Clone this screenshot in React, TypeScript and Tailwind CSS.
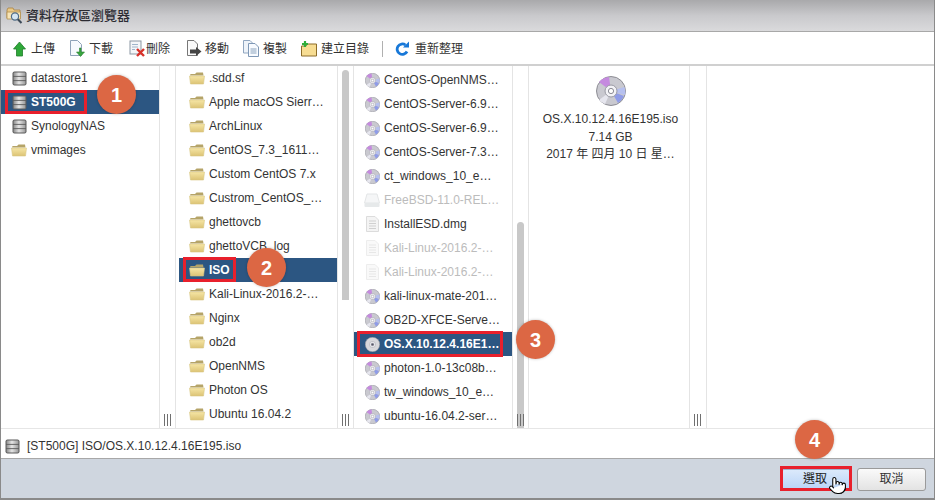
/**
 * Datastore browser dialog (vSphere style), with numbered callouts on top.
 */

import { Pointer } from 'lucide-react';

type Kind = 'db' | 'folder' | 'disc' | 'file' | 'drive';

interface Row {
  label: string;
  kind: Kind;
  disabled?: boolean;
  selected?: boolean;
}

const datastores: Row[] = [
  { label: 'datastore1', kind: 'db' },
  { label: 'ST500G', kind: 'db', selected: true },
  { label: 'SynologyNAS', kind: 'db' },
  { label: 'vmimages', kind: 'folder' },
];

const folders: Row[] = [
  { label: '.sdd.sf', kind: 'folder' },
  { label: 'Apple macOS Sierr…', kind: 'folder' },
  { label: 'ArchLinux', kind: 'folder' },
  { label: 'CentOS_7.3_1611…', kind: 'folder' },
  { label: 'Custom CentOS 7.x', kind: 'folder' },
  { label: 'Custrom_CentOS_…', kind: 'folder' },
  { label: 'ghettovcb', kind: 'folder' },
  { label: 'ghettoVCB_log', kind: 'folder' },
  { label: 'ISO', kind: 'folder', selected: true },
  { label: 'Kali-Linux-2016.2-…', kind: 'folder' },
  { label: 'Nginx', kind: 'folder' },
  { label: 'ob2d', kind: 'folder' },
  { label: 'OpenNMS', kind: 'folder' },
  { label: 'Photon OS', kind: 'folder' },
  { label: 'Ubuntu 16.04.2', kind: 'folder' },
];

const files: Row[] = [
  { label: 'CentOS-OpenNMS…', kind: 'disc' },
  { label: 'CentOS-Server-6.9…', kind: 'disc' },
  { label: 'CentOS-Server-6.9…', kind: 'disc' },
  { label: 'CentOS-Server-7.3…', kind: 'disc' },
  { label: 'ct_windows_10_e…', kind: 'disc' },
  { label: 'FreeBSD-11.0-REL…', kind: 'drive', disabled: true },
  { label: 'InstallESD.dmg', kind: 'file' },
  { label: 'Kali-Linux-2016.2-…', kind: 'file', disabled: true },
  { label: 'Kali-Linux-2016.2-…', kind: 'file', disabled: true },
  { label: 'kali-linux-mate-201…', kind: 'disc' },
  { label: 'OB2D-XFCE-Serve…', kind: 'disc' },
  { label: 'OS.X.10.12.4.16E1…', kind: 'disc', selected: true },
  { label: 'photon-1.0-13c08b…', kind: 'disc' },
  { label: 'tw_windows_10_e…', kind: 'disc' },
  { label: 'ubuntu-16.04.2-ser…', kind: 'disc' },
];

function DbIcon() {
  return (
    <svg width="15" height="15" viewBox="0 0 15 15">
      <defs>
        <linearGradient id="db-band" x1="0" x2="1" y1="0" y2="0">
          <stop offset="0" stopColor="#8d8d8d" />
          <stop offset="0.45" stopColor="#e6e6e6" />
          <stop offset="1" stopColor="#9a9a9a" />
        </linearGradient>
      </defs>
      <rect x="0.5" y="0.5" width="14" height="14" rx="2" fill="#5a5a5a" />
      <rect x="1.5" y="1.5" width="12" height="3.4" fill="url(#db-band)" />
      <rect x="1.5" y="5.8" width="12" height="3.4" fill="url(#db-band)" />
      <rect x="1.5" y="10.1" width="12" height="3.4" fill="url(#db-band)" />
    </svg>
  );
}

function FolderIcon() {
  return (
    <svg width="16" height="14" viewBox="0 0 16 14">
      <defs>
        <linearGradient id="folder-front" x1="0" x2="0" y1="0" y2="1">
          <stop offset="0" stopColor="#f6e6a6" />
          <stop offset="1" stopColor="#dcc374" />
        </linearGradient>
      </defs>
      <path d="M1 4.5 L1.5 3 H6 L7.5 1.5 H14 L14.5 4.5 Z" fill="#b5a468" />
      <path d="M0.5 5 H15.5 L14.5 13 H1.5 Z" fill="url(#folder-front)" stroke="#d9c884" strokeWidth="0.6" />
    </svg>
  );
}

function DiscIcon({ size = 15, selected = false }: { size?: number; selected?: boolean }) {
  return (
    <svg width={size} height={size} viewBox="0 0 30 30">
      <circle cx="15" cy="15" r="14.5" fill={selected ? '#d8d8dc' : '#c9c9d0'} stroke="#8d8d94" strokeWidth="1" />
      {!selected && (
        <>
          <path d="M15 15 L3 6 A14.5 14.5 0 0 1 13 1 Z" fill="#c58adf" />
          <path d="M15 15 L28 20 A14.5 14.5 0 0 1 22 27 Z" fill="#8f9ce8" />
          <path d="M15 15 L28.5 11 A14.5 14.5 0 0 1 29 19 Z" fill="#b6c0ef" />
          <path d="M15 15 L3 24 A14.5 14.5 0 0 0 9 28 Z" fill="#e6e6ee" />
        </>
      )}
      <circle cx="15" cy="15" r="6" fill="#f2f2f6" stroke="#9a9aa4" strokeWidth="1" />
      <circle cx="15" cy="15" r="2.6" fill={selected ? '#556' : '#fff'} stroke="#8a8a94" strokeWidth="1" />
    </svg>
  );
}

function FileIcon() {
  return (
    <svg width="13" height="16" viewBox="0 0 13 16">
      <path d="M0.5 0.5 H9 L12.5 4 V15.5 H0.5 Z" fill="#f4f4f4" stroke="#dcdcdc" />
      <path d="M3 5 H10 M3 7.5 H10 M3 10 H10 M3 12.5 H10" stroke="#d0d0d0" strokeWidth="1.2" />
    </svg>
  );
}

function DriveIcon() {
  return (
    <svg width="16" height="15" viewBox="0 0 16 15">
      <path d="M3 1 H13 L15.5 10 H0.5 Z" fill="#eceff1" stroke="#c9cdd0" />
      <rect x="0.5" y="10" width="15" height="4" rx="1" fill="#cfd4d7" />
    </svg>
  );
}

function RowIcon({ row }: { row: Row }) {
  switch (row.kind) {
    case 'db':
      return <DbIcon />;
    case 'folder':
      return <FolderIcon />;
    case 'disc':
      return <DiscIcon selected={row.selected} />;
    case 'drive':
      return <DriveIcon />;
    default:
      return <FileIcon />;
  }
}

function TitleIcon() {
  return (
    <svg width="17" height="17" viewBox="0 0 17 17">
      <path d="M1 3 L2 1 H7 L8 3 H14 V11 H1 Z" fill="#e9c987" stroke="#a8813f" strokeWidth="0.8" />
      <path d="M1 5 H14.5 V12 H1 Z" fill="#f7e4b5" stroke="#b48f4c" strokeWidth="0.8" />
      <circle cx="9" cy="9.5" r="3.6" fill="#d5e6f2" stroke="#4f6c86" strokeWidth="1.2" />
      <path d="M11.8 12.3 L15.5 16" stroke="#3c4a58" strokeWidth="2" />
    </svg>
  );
}

function UploadIcon() {
  return (
    <svg width="13" height="16" viewBox="0 0 13 16">
      <path d="M6.5 1 L12.5 8 H9.5 V15 H3.5 V8 H0.5 Z" fill="#2fa83a" stroke="#1f7d2b" strokeWidth="0.8" />
    </svg>
  );
}

function DownloadIcon() {
  return (
    <svg width="17" height="17" viewBox="0 0 17 17">
      <path d="M1.5 0.5 H8.5 L12.5 4.5 V15.5 H1.5 Z" fill="#f7fafd" stroke="#8fa3b8" />
      <path d="M12 8 V12 H15.5 L11.5 16.5 L7.5 12 H10.5 V8 Z" fill="#3aa53f" stroke="#2a7f30" strokeWidth="0.6" />
    </svg>
  );
}

function DeleteIcon() {
  return (
    <svg width="17" height="17" viewBox="0 0 17 17">
      <rect x="1" y="1" width="11" height="13" fill="#f4f6f8" stroke="#8b97a3" />
      <path d="M3 4.5 H9 M3 7 H9 M3 9.5 H6" stroke="#9fb4ca" strokeWidth="1" />
      <path d="M8 9 L15 16 M15 9 L8 16" stroke="#d8312a" strokeWidth="2.4" />
    </svg>
  );
}

function MoveIcon() {
  return (
    <svg width="16" height="17" viewBox="0 0 16 17">
      <path d="M1.5 0.5 H8 L11.5 4 V15.5 H1.5 Z" fill="#fafafa" stroke="#777" />
      <path d="M4 9.5 H10 V7 L15.5 11.5 L10 16 V13.5 H4 Z" fill="#444" />
    </svg>
  );
}

function CopyIcon() {
  return (
    <svg width="17" height="17" viewBox="0 0 17 17">
      <path d="M0.5 0.5 H7 L10 3.5 V13 H0.5 Z" fill="#eef3f9" stroke="#90a6c0" />
      <path d="M5.5 3.5 H12 L15.5 7 V16.5 H5.5 Z" fill="#f8fbff" stroke="#7f98b6" />
      <path d="M7.5 9 H13.5 M7.5 11 H13.5 M7.5 13 H13.5" stroke="#7f98b6" strokeWidth="0.9" />
    </svg>
  );
}

function NewFolderIcon() {
  return (
    <svg width="16" height="16" viewBox="0 0 16 16">
      <path d="M0.5 5 H5 L6 3 H15.5 V15 H0.5 Z" fill="#f7dd93" stroke="#8d6d2a" />
      <path d="M4 0 V6 M1 3 H7" stroke="#2fae3b" strokeWidth="2.2" />
    </svg>
  );
}

function RefreshIcon() {
  return (
    <svg width="15" height="15" viewBox="0 0 15 15">
      <path d="M12 10.5 A5.2 5.2 0 1 1 10.5 4" fill="none" stroke="#1878d8" strokeWidth="2.8" />
      <path d="M8 6.5 H14 V0.5 Z" fill="#1878d8" />
    </svg>
  );
}

function Tool({
  label,
  icon: Icon,
  className,
  iconBox,
}: {
  label: string;
  icon: () => React.JSX.Element;
  className: string;
  iconBox: string;
}) {
  return (
    <div className={`flex shrink-0 items-center ${className}`}>
      <span className={`flex shrink-0 ${iconBox}`}>
        <Icon />
      </span>
      <span className="whitespace-nowrap">{label}</span>
    </div>
  );
}

function ColumnRow({ row }: { row: Row }) {
  const tone = row.selected
    ? 'bg-[#2c5682] font-bold text-white'
    : row.disabled
      ? 'text-[#bcbcbc]'
      : 'text-[#333333]';
  return (
    <div className={`flex h-6 items-center whitespace-nowrap ${tone}`}>
      <span className={`ml-[10px] flex w-[16px] shrink-0 justify-center ${row.disabled ? 'opacity-50' : ''}`}>
        <RowIcon row={row} />
      </span>
      <span className="ml-1">{row.label}</span>
    </div>
  );
}

// the gutter right of each column: optional scrollbar thumb plus the ||| grip
function Gutter({ thumb, width }: { thumb?: string; width: string }) {
  return (
    <div className={`relative shrink-0 border-x border-[#e4e4e4] ${width}`}>
      {thumb && <div className={`w-[7px] rounded-t-[4px] bg-[#c8c8c8] ${thumb}`} />}
      <div className="absolute bottom-[2px] left-[4px] flex h-3 gap-[2px]">
        <span className="w-px bg-[#707070]" />
        <span className="w-px bg-[#707070]" />
        <span className="w-px bg-[#707070]" />
      </div>
    </div>
  );
}

function Callout({ n, className }: { n: number; className: string }) {
  return (
    <div
      className={`absolute flex h-[39px] w-[39px] items-center justify-center rounded-full bg-[#dc6744] text-[20px] font-bold text-white shadow-[0_0_3px_rgba(0,0,0,0.25)] ${className}`}
    >
      {n}
    </div>
  );
}

function RedBox({ className }: { className: string }) {
  return <div className={`absolute border-[3px] border-[#e8202c] ${className}`} />;
}

export default function App() {
  return (
    <div
      className="relative flex h-[500px] w-[935px] flex-col overflow-hidden border-x border-b-2 border-[#8a8a8a] bg-white text-[12px] text-[#333333]"
      style={{ fontFamily: '"Liberation Sans", "Noto Sans CJK TC", sans-serif' }}
    >
      {/* Title bar */}
      <div className="flex h-8 shrink-0 items-center gap-[3px] border-b border-[#a8a8a8] bg-gradient-to-b from-[#a9a9ab] via-[#c9c9cc] to-[#dadadc] pl-[5px]">
        <TitleIcon />
        <span className="text-[13px] font-medium text-[#2b2b33]">資料存放區瀏覽器</span>
      </div>

      {/* Toolbar */}
      <div className="flex h-[34px] shrink-0 items-center border-b-2 border-[#d0d0d0] pl-[12px] pt-[1px]">
        <Tool label="上傳" icon={UploadIcon} className="w-[56px]" iconBox="w-[18px]" />
        <Tool label="下載" icon={DownloadIcon} className="w-[60px]" iconBox="w-[20px]" />
        <Tool label="刪除" icon={DeleteIcon} className="w-[57px]" iconBox="w-[17px]" />
        <Tool label="移動" icon={MoveIcon} className="w-[57px]" iconBox="w-[19px]" />
        <Tool label="複製" icon={CopyIcon} className="w-[58px]" iconBox="w-[20px]" />
        <Tool label="建立目錄" icon={NewFolderIcon} className="w-[81px]" iconBox="w-[20px]" />
        <div className="mr-[12px] h-[16px] w-px bg-[#b0b0b0]" />
        <Tool label="重新整理" icon={RefreshIcon} className="w-[80px]" iconBox="w-[20px]" />
      </div>

      {/* Columns */}
      <div className="flex h-[362px] shrink-0">
        <div className="w-[158px] shrink-0">
          {datastores.map((row) => (
            <ColumnRow key={row.label} row={row} />
          ))}
        </div>
        <Gutter width="w-[17px]" />
        <div className="w-[161px] shrink-0 pl-[3px]">
          {folders.map((row) => (
            <ColumnRow key={row.label} row={row} />
          ))}
        </div>
        <Gutter width="w-[17px]" thumb="ml-[4px] mt-[4px] h-[230px]" />
        <div className="w-[158px] shrink-0 pt-[2px]">
          {files.map((row, i) => (
            <ColumnRow key={`${row.label}-${i}`} row={row} />
          ))}
        </div>
        <Gutter width="w-[17px]" thumb="ml-[4px] mt-[156px] h-[206px]" />
        <div className="flex w-[160px] shrink-0 flex-col items-center pl-[3px] pt-[10px] text-center leading-[17.5px]">
          <DiscIcon size={30} />
          <div className="mt-[5px]">OS.X.10.12.4.16E195.iso</div>
          <div>7.14 GB</div>
          <div>2017 年 四月 10 日 星…</div>
        </div>
        <Gutter width="w-[18px]" />
      </div>

      {/* Selected path */}
      <div className="flex h-[31px] shrink-0 items-center gap-[7px] border-y border-t-[#e6e6e6] border-b-[#a8a8a8] pl-[4px] pt-[5px]">
        <DbIcon />
        <span>[ST500G] ISO/OS.X.10.12.4.16E195.iso</span>
      </div>

      {/* Footer */}
      <div className="flex flex-1 items-center justify-end gap-[6px] bg-[#cfd6df] pr-[8px] pt-[1px]">
        <button className="h-[21px] w-[70px] rounded-[3px] border border-[#9db4cf] bg-gradient-to-b from-[#dbe9fb] to-[#b9d4f7] pr-[2px] text-[12px] text-[#222222]">
          選取
        </button>
        <button className="h-[23px] w-[69px] rounded-[3px] border border-[#9a9a9a] bg-gradient-to-b from-[#fafafa] to-[#e3e3e3] text-[12px] text-[#333333]">
          取消
        </button>
      </div>

      {/* Callouts */}
      <RedBox className="left-[4px] top-[90px] h-[24px] w-[82px]" />
      <RedBox className="left-[182px] top-[257px] h-[25px] w-[53px]" />
      <RedBox className="left-[356px] top-[331px] h-[26px] w-[146px]" />
      <RedBox className="left-[779px] top-[466px] h-[25px] w-[72px]" />
      <Callout n={1} className="left-[96px] top-[75px]" />
      <Callout n={2} className="left-[246px] top-[248px]" />
      <Callout n={3} className="left-[515px] top-[320px]" />
      <Callout n={4} className="left-[794px] top-[420px]" />
      <Pointer className="absolute left-[827px] top-[475px] h-[21px] w-[19px] fill-white text-black" strokeWidth={1.3} />
    </div>
  );
}
